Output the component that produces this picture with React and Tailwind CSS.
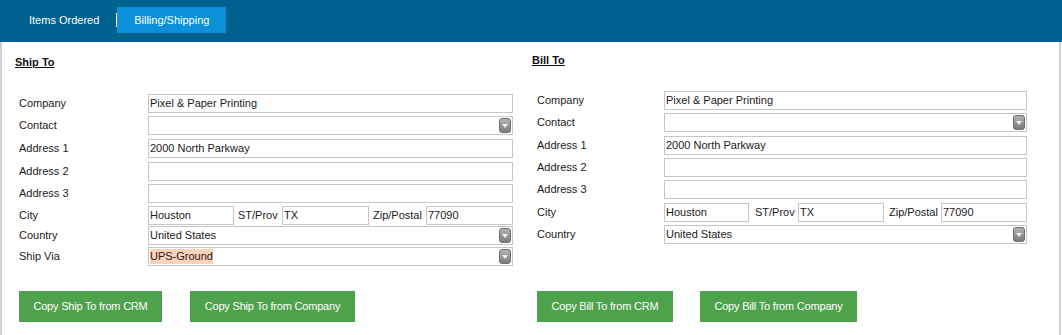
import React from "react";

const F = { fontFamily: '"Liberation Sans", Arial, Helvetica, sans-serif' };

function Box({ w, children, select, hl }) {
  return (
    <div
      className={`relative h-[19px] border border-[#c6c6c6] bg-white flex items-center pl-[1px] text-[11px] text-[#1a1a1a] ${w || "flex-1"}`}
    >
      {hl ? <span className="bg-[#fcd2b8] leading-[15px]">{children}</span> : children}
      {select && (
        <div className="absolute right-[1px] top-[1px] h-[15px] w-[12px] rounded-[3px] border border-[#6e6e6e] bg-gradient-to-b from-[#b4b4b4] to-[#7c7c7c] flex items-center justify-center">
          <svg width="6" height="4" viewBox="0 0 6 4">
            <path d="M0 0 L6 0 L3 4 Z" fill="#f2f2f2" />
          </svg>
        </div>
      )}
    </div>
  );
}

function Row({ label, h, lw, children }) {
  return (
    <div className={`flex ${h}`}>
      <div className={`${lw} h-[19px] flex items-center text-[11px] text-[#1a1a1a]`}>{label}</div>
      <div className="flex-1 flex items-start">{children}</div>
    </div>
  );
}

function Btn({ w, children }) {
  return (
    <div
      className={`${w} h-[31px] bg-[#4ea24b] text-white text-[11px] tracking-[-0.2px] flex items-center justify-center`}
    >
      {children}
    </div>
  );
}

export default function App() {
  return (
    <div style={F} className="w-[1062px] h-[335px] bg-white overflow-hidden">
      <div className="h-[42px] bg-[#00608e] flex items-start pt-[7px]">
        <div className="ml-[29px] h-[26px] flex items-center text-white text-[11px]">Items Ordered</div>
        <div className="ml-[17px] mt-[6px] w-[1px] h-[14px] bg-white"></div>
        <div className="w-[109px] h-[26px] bg-[#0a91da] flex items-center justify-center text-white text-[11px]">
          Billing/Shipping
        </div>
      </div>
      <div className="h-[293px] mr-[1px] border-l-2 border-r-2 border-[#cfcfcf] flex">
        {/* Left column */}
        <div className="w-[515px] flex flex-col pl-[13px]">
          <div className="mt-[13px] h-[14px] text-[11px] font-bold underline text-[#111] leading-[14px]">Ship To</div>
          <div className="mt-[25px] pl-[4px] w-[498px] flex flex-col">
            <Row label="Company" h="h-[22px]" lw="w-[129px]"><Box>Pixel &amp; Paper Printing</Box></Row>
            <Row label="Contact" h="h-[23px]" lw="w-[129px]"><Box select></Box></Row>
            <Row label="Address 1" h="h-[23px]" lw="w-[129px]"><Box>2000 North Parkway</Box></Row>
            <Row label="Address 2" h="h-[22px]" lw="w-[129px]"><Box></Box></Row>
            <Row label="Address 3" h="h-[22px]" lw="w-[129px]"><Box></Box></Row>
            <Row label="City" h="h-[20px]" lw="w-[129px]">
              <Box w="w-[86px]">Houston</Box>
              <div className="w-[48px] pl-[4px] h-[19px] flex items-center text-[11px] text-[#1a1a1a]">ST/Prov</div>
              <Box w="w-[87px]">TX</Box>
              <div className="w-[57px] pl-[4px] h-[19px] flex items-center text-[11px] text-[#1a1a1a]">Zip/Postal</div>
              <Box w="w-[87px]">77090</Box>
            </Row>
            <Row label="Country" h="h-[21px]" lw="w-[129px]"><Box select>United States</Box></Row>
            <Row label="Ship Via" h="h-[21px]" lw="w-[129px]"><Box select hl>UPS-Ground</Box></Row>
          </div>
          <div className="mt-[23px] pl-[4px] flex gap-[28px]">
            <Btn w="w-[143px]">Copy Ship To from CRM</Btn>
            <Btn w="w-[165px]">Copy Ship To from Company</Btn>
          </div>
        </div>
        {/* Right column */}
        <div className="w-[530px] flex flex-col pl-[15px]">
          <div className="mt-[11px] h-[14px] text-[11px] font-bold underline text-[#111] leading-[14px]">Bill To</div>
          <div className="mt-[24px] pl-[5px] w-[495px] flex flex-col">
            <Row label="Company" h="h-[22px]" lw="w-[127px]"><Box>Pixel &amp; Paper Printing</Box></Row>
            <Row label="Contact" h="h-[23px]" lw="w-[127px]"><Box select></Box></Row>
            <Row label="Address 1" h="h-[22px]" lw="w-[127px]"><Box>2000 North Parkway</Box></Row>
            <Row label="Address 2" h="h-[22px]" lw="w-[127px]"><Box></Box></Row>
            <Row label="Address 3" h="h-[23px]" lw="w-[127px]"><Box></Box></Row>
            <Row label="City" h="h-[22px]" lw="w-[127px]">
              <Box w="w-[85px]">Houston</Box>
              <div className="w-[49px] pl-[6px] h-[19px] flex items-center text-[11px] text-[#1a1a1a]">ST/Prov</div>
              <Box w="w-[86px]">TX</Box>
              <div className="w-[57px] pl-[5px] h-[19px] flex items-center text-[11px] text-[#1a1a1a]">Zip/Postal</div>
              <Box w="w-[86px]">77090</Box>
            </Row>
            <Row label="Country" h="h-[22px]" lw="w-[127px]"><Box select>United States</Box></Row>
          </div>
          <div className="mt-[44px] pl-[5px] flex gap-[27px]">
            <Btn w="w-[136px]">Copy Bill To from CRM</Btn>
            <Btn w="w-[157px]">Copy Bill To from Company</Btn>
          </div>
        </div>
      </div>
    </div>
  );
}
